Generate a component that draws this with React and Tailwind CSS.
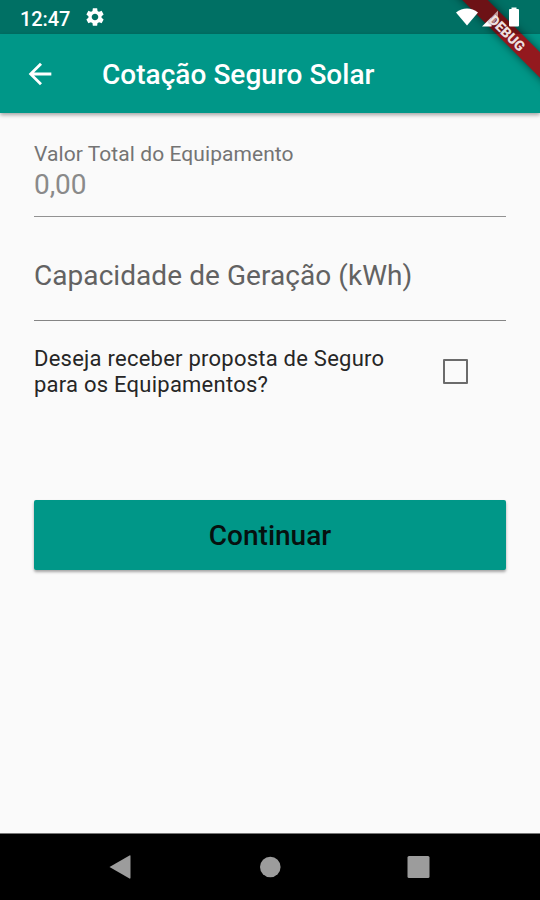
function Gear() {
  return (
    <svg viewBox="0 0 24 24" className="ml-[14px] size-[22px] fill-white">
      <path d="M19.14 12.94c.04-.3.06-.61.06-.94 0-.32-.02-.64-.07-.94l2.03-1.58c.18-.14.23-.41.12-.61l-1.92-3.32c-.12-.22-.37-.29-.59-.22l-2.39.96c-.5-.38-1.03-.7-1.62-.94l-.36-2.54c-.04-.24-.24-.41-.48-.41h-3.84c-.24 0-.43.17-.47.41l-.36 2.54c-.59.24-1.13.57-1.62.94l-2.39-.96c-.22-.08-.47 0-.59.22L2.74 8.87c-.12.21-.08.47.12.61l2.03 1.58c-.05.3-.09.63-.09.94s.02.64.07.94l-2.03 1.58c-.18.14-.23.41-.12.61l1.92 3.32c.12.22.37.29.59.22l2.39-.96c.5.38 1.03.7 1.62.94l.36 2.54c.05.24.24.41.48.41h3.84c.24 0 .44-.17.47-.41l.36-2.54c.59-.24 1.13-.56 1.62-.94l2.39.96c.22.08.47 0 .59-.22l1.92-3.32c.12-.22.07-.47-.12-.61l-2.01-1.58zM12 15.6c-1.98 0-3.6-1.62-3.6-3.6s1.62-3.6 3.6-3.6 3.6 1.62 3.6 3.6-1.62 3.6-3.6 3.6z" />
    </svg>
  );
}

function StatusBar() {
  return (
    <div className="relative z-20 flex h-[34px] items-center bg-[rgba(0,0,0,0.26)] pl-[20px] pr-[19px] text-white">
      <span className="w-[50px] whitespace-nowrap pt-[3px] text-[20px] font-medium leading-6 tracking-[-0.1px]">12:47</span>
      <Gear />
      <svg viewBox="0 0 66 20" className="ml-auto h-[20px] w-[66px] fill-white">
        <path d="M1 5.5C7.5.2 16.500.2 23 5.500L12 18.500Z" />
        <path d="M27 19.500 36.500 10V19.500Z" />
        <path d="M36.500 10 43 3.500V10L36.500 19.500Z" opacity="0.6" />
        <path d="M54 3Q54 2 55 2H56.500V.5H61.500V2H63Q64 2 64 3V18.500Q64 19.500 63 19.500H55Q54 19.500 54 18.500Z" />
      </svg>
    </div>
  );
}

function AppBar() {
  return (
    <header className="relative flex h-[79px] items-center bg-[#009788] pl-[23px] text-white shadow-[0_2px_4px_rgba(0,0,0,0.35)]">
      <svg viewBox="0 0 24 24" className="size-[34px] fill-white">
        <path d="M20 11H7.830l5.590-5.590L12 4l-8 8 8 8 1.410-1.410L7.830 13H20v-2z" />
      </svg>
      <h1 className="ml-[45px] whitespace-nowrap pt-[2px] text-[28px] font-medium leading-8 tracking-[0.03px]">Cotação Seguro Solar</h1>
    </header>
  );
}

function DebugBanner() {
  return (
    <>
      <div className="pointer-events-none absolute right-0 top-0 z-10 size-[113px] overflow-hidden">
        <div className="absolute left-[-20px] top-[23px] h-[18px] w-[200px] rotate-45 bg-[#93191e] shadow-[0_0_8px_rgba(0,0,0,0.55)]" />
      </div>
      <div className="pointer-events-none absolute right-0 top-0 z-30 size-[113px] overflow-hidden">
        <div className="absolute left-[-20px] top-[24px] flex h-[18px] w-[200px] rotate-45 items-center justify-center text-[14px] font-black leading-none tracking-[-0.1px] text-[#eee0e0] [text-shadow:0_0_2px_rgba(110,20,25,0.8)]">
          DEBUG
        </div>
      </div>
    </>
  );
}

export default function App() {
  return (
    <div className="relative flex h-[900px] w-[540px] flex-col overflow-hidden bg-[#009788] font-['Roboto','Liberation_Sans',sans-serif]">
      <StatusBar />
      <AppBar />
      <main className="flex flex-1 flex-col bg-[#fafafa] px-[34px]">
        <label className="flex h-[104px] flex-col whitespace-nowrap border-b border-[#929292] pt-[29px]">
          <span className="text-[21px] leading-[24px] tracking-[0.07px] text-[#747474]">Valor Total do Equipamento</span>
          <span className="mt-[2px] text-[28px] leading-[34px] tracking-[-0.1px] text-[#8a8a8a]">0,00</span>
        </label>
        <label className="flex h-[104px] flex-col whitespace-nowrap border-b border-[#858585] pt-[42px]">
          <span className="text-[28px] leading-[34px] tracking-[0.06px] text-[#626262]">Capacidade de Geração (kWh)</span>
        </label>
        <div className="flex h-[101px] items-center justify-between pr-[38px]">
          <p className="whitespace-nowrap pt-[1px] text-[22px] leading-[26px] tracking-[0.24px] text-[#262626]">
            Deseja receber proposta de Seguro
            <br />
            para os Equipamentos?
          </p>
          <div role="checkbox" aria-checked="false" className="size-[25px] rounded-[1px] border-2 border-[#6b6b6b]" />
        </div>
        <button className="mt-[78px] h-[70px] rounded-[2px] bg-[#009788] pt-[2px] text-[28px] font-medium text-[#06110f] shadow-[0_2px_3px_rgba(0,0,0,0.35)]">
          Continuar
        </button>
      </main>
      <nav className="flex h-[67px] items-center justify-center border-t border-[#777] bg-black">
        <svg viewBox="0 0 540 66" className="h-[66px] w-[540px] fill-[#9c9c9c]">
          <path d="M109.500 33 129.500 21.500Q130.500 21 130.500 22V43.500Q130.500 45 129.500 44.500Z" />
          <circle cx="270.300" cy="33" r="10.300" />
          <rect x="407.500" y="22" width="22" height="22" rx="1.500" />
        </svg>
      </nav>
      <DebugBanner />
    </div>
  );
}
